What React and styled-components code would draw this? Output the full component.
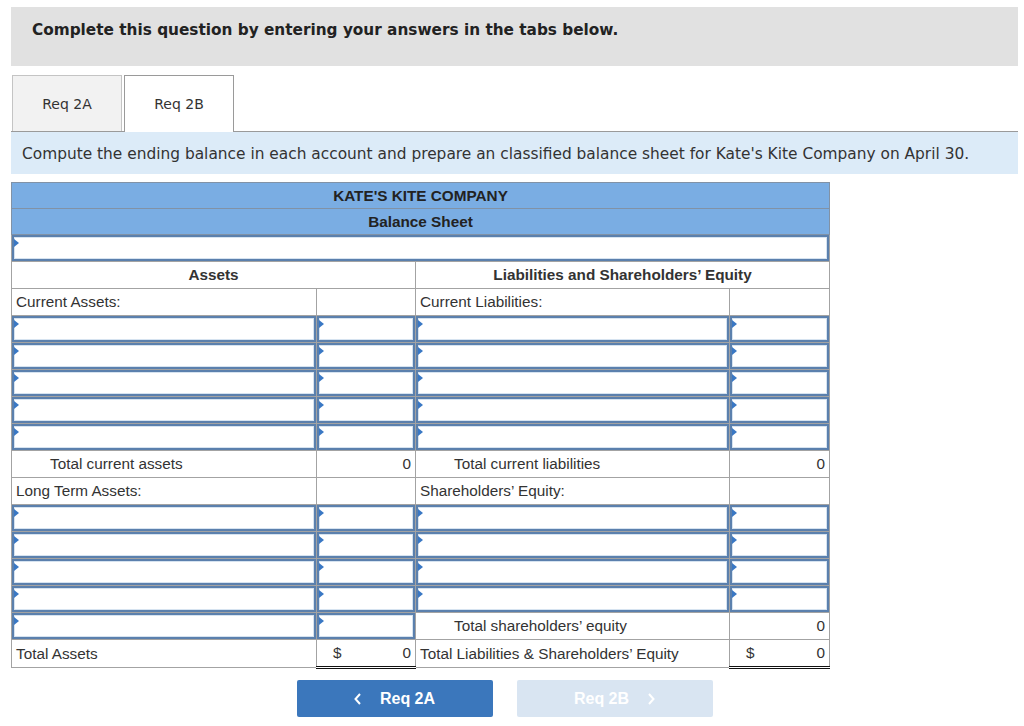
import React from "react";
import styled, { createGlobalStyle } from "styled-components";

const GlobalStyle = createGlobalStyle`
  body {
    margin: 0;
    background: #ffffff;
    font-family: "DejaVu Sans", Verdana, sans-serif;
    color: #333333;
  }
`;

const Page = styled.div`
  width: 1007px;
  margin-left: 11px;
  padding-top: 7px;
`;

const Banner = styled.div`
  background: #e1e1e1;
  height: 59px;
  padding-left: 21px;
  display: flex;
  align-items: center;
  padding-bottom: 14px;
  box-sizing: border-box;
  font-weight: bold;
  font-size: 15.3px;
  color: #222222;
`;

const TabBar = styled.div`
  margin-top: 9px;
  display: flex;
  gap: 2px;
  padding-left: 1px;
  border-bottom: 1px solid #9a9a9a;
  height: 56px;
`;

const Tab = styled.div`
  width: 110px;
  height: 56px;
  box-sizing: border-box;
  border: 1px solid #c4c4c4;
  border-bottom: none;
  background: ${(p) => (p.active ? "#ffffff" : "#f2f2f2")};
  ${(p) => p.active && "border-color: #9a9a9a; height: 57px;"}
  display: flex;
  align-items: center;
  justify-content: center;
  font-size: 14px;
  color: #333333;
`;

const Prompt = styled.div`
  background: #dcebf8;
  height: 42px;
  display: flex;
  align-items: center;
  padding-left: 11px;
  padding-top: 2px;
  box-sizing: border-box;
  font-size: 15.4px;
  color: #333333;
`;

const Sheet = styled.table`
  margin-top: 8px;
  width: 818px;
  border-collapse: collapse;
  table-layout: fixed;
  font-family: "Liberation Sans", Arial, sans-serif;
  font-size: 15.3px;
  color: #333333;
`;

const TitleCell = styled.td`
  background: #7aade3;
  height: 25px;
  padding: 0;
  text-align: center;
  font-weight: bold;
  border: 1px solid #8192a6;
  color: #222222;
`;

const Cell = styled.td`
  height: 26px;
  padding: 0 4px;
  border: 1px solid #a3a3a3;
  text-align: ${(p) => p.align || "left"};
  font-weight: ${(p) => (p.bold ? "bold" : "normal")};
  ${(p) => p.indent && "padding-left: 38px;"}
  ${(p) => p.total && "border-top: 1px solid #111111;"}
  ${(p) => p.grand && "border-top: 1px solid #111111; border-bottom: 3px double #111111;"}
  white-space: nowrap;
`;

const InputCell = styled.td`
  height: 26px;
  padding: 0;
  border: 1px solid #a3a3a3;
`;

const Field = styled.div`
  position: relative;
  height: 26px;
  box-sizing: border-box;
  border: 2px solid #5b80ad;
  box-shadow: inset 0 0 0 1px #d6e3f0;
  background: #ffffff;

  &::before {
    content: "";
    position: absolute;
    left: 0;
    top: 2px;
    border-left: 5px solid #3a78c4;
    border-top: 4px solid transparent;
    border-bottom: 4px solid transparent;
  }
`;

const Money = styled.div`
  display: flex;
  justify-content: space-between;
  padding-left: 12px;
`;

const Nav = styled.div`
  display: flex;
  justify-content: center;
  gap: 24px;
  margin-top: 11px;
  padding-right: 20px;
`;

const NavButton = styled.div`
  width: 196px;
  height: 37px;
  border-radius: 2px;
  background: ${(p) => (p.disabled ? "#d9e5f2" : "#3b77bc")};
  color: #ffffff;
  display: flex;
  align-items: center;
  justify-content: center;
  gap: 18px;
  font-family: "Liberation Sans", Arial, sans-serif;
  font-weight: bold;
  font-size: 16px;
`;

const Chevron = ({ dir }) => (
  <svg width="8" height="12" viewBox="0 0 8 12">
    <path
      d={dir === "left" ? "M6 1 L1.5 6 L6 11" : "M2 1 L6.5 6 L2 11"}
      fill="none"
      stroke="#ffffff"
      strokeWidth="2"
    />
  </svg>
);

const In = () => (
  <InputCell>
    <Field />
  </InputCell>
);

const InputRow = () => (
  <tr>
    <In />
    <In />
    <In />
    <In />
  </tr>
);

export default function App() {
  return (
    <>
      <GlobalStyle />
      <Page>
        <Banner>Complete this question by entering your answers in the tabs below.</Banner>
        <TabBar>
          <Tab>Req 2A</Tab>
          <Tab active>Req 2B</Tab>
        </TabBar>
        <Prompt>
          Compute the ending balance in each account and prepare an classified balance sheet for Kate's Kite Company on April 30.
        </Prompt>
        <Sheet>
          <colgroup>
            <col style={{ width: 305 }} />
            <col style={{ width: 99 }} />
            <col style={{ width: 314 }} />
            <col style={{ width: 100 }} />
          </colgroup>
          <tbody>
            <tr>
              <TitleCell colSpan={4}>KATE'S KITE COMPANY</TitleCell>
            </tr>
            <tr>
              <TitleCell colSpan={4}>Balance Sheet</TitleCell>
            </tr>
            <tr>
              <InputCell colSpan={4}>
                <Field />
              </InputCell>
            </tr>
            <tr>
              <Cell colSpan={2} align="center" bold>Assets</Cell>
              <Cell colSpan={2} align="center" bold>Liabilities and Shareholders’ Equity</Cell>
            </tr>
            <tr>
              <Cell>Current Assets:</Cell>
              <Cell />
              <Cell>Current Liabilities:</Cell>
              <Cell />
            </tr>
            <InputRow />
            <InputRow />
            <InputRow />
            <InputRow />
            <InputRow />
            <tr>
              <Cell indent>Total current assets</Cell>
              <Cell align="right" total>0</Cell>
              <Cell indent>Total current liabilities</Cell>
              <Cell align="right" total>0</Cell>
            </tr>
            <tr>
              <Cell>Long Term Assets:</Cell>
              <Cell />
              <Cell>Shareholders’ Equity:</Cell>
              <Cell />
            </tr>
            <InputRow />
            <InputRow />
            <InputRow />
            <InputRow />
            <tr>
              <In />
              <In />
              <Cell indent>Total shareholders’ equity</Cell>
              <Cell align="right" total>0</Cell>
            </tr>
            <tr>
              <Cell>Total Assets</Cell>
              <Cell grand>
                <Money>
                  <span>$</span>
                  <span>0</span>
                </Money>
              </Cell>
              <Cell>Total Liabilities &amp; Shareholders’ Equity</Cell>
              <Cell grand>
                <Money>
                  <span>$</span>
                  <span>0</span>
                </Money>
              </Cell>
            </tr>
          </tbody>
        </Sheet>
        <Nav>
          <NavButton>
            <Chevron dir="left" />
            <span>Req 2A</span>
          </NavButton>
          <NavButton disabled>
            <span>Req 2B</span>
            <Chevron dir="right" />
          </NavButton>
        </Nav>
      </Page>
    </>
  );
}
